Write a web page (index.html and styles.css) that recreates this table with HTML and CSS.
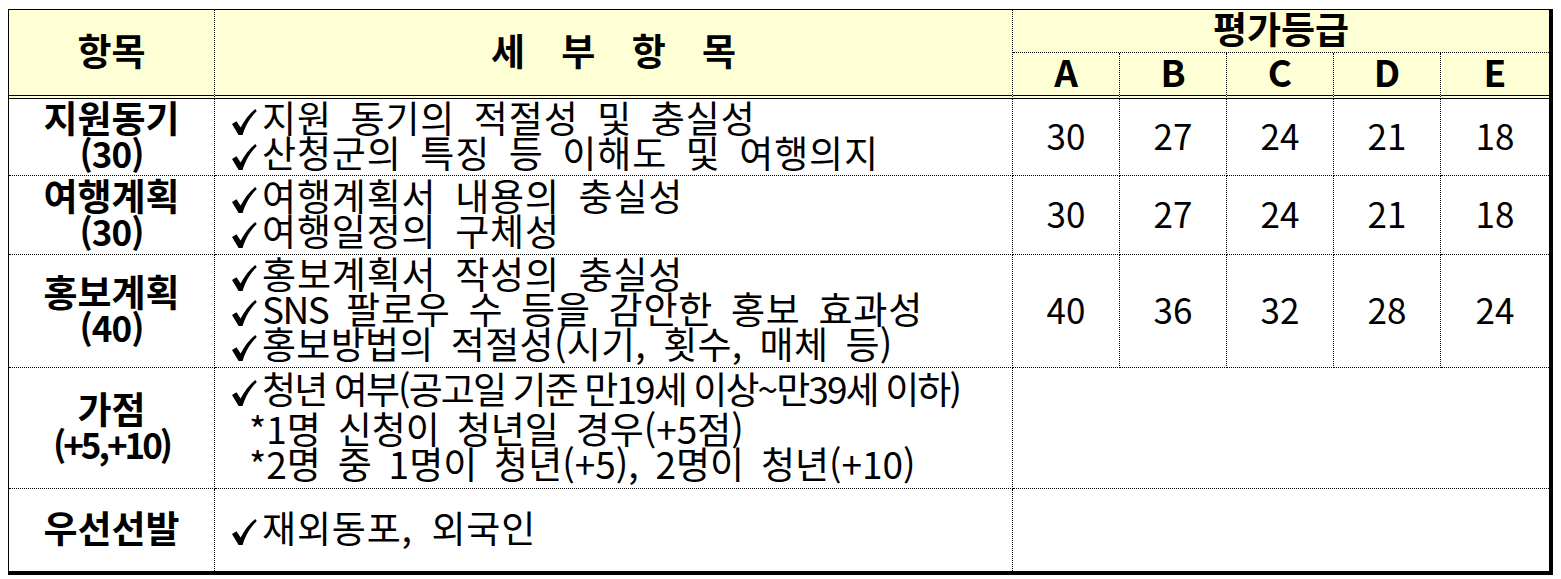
FILE: index.html
```html
<!DOCTYPE html>
<html lang="ko">
<head>
<meta charset="utf-8">
<title>평가등급</title>
<link rel="stylesheet" href="styles.css">
</head>
<body>
<div class="sheet">
  <div class="cell head h-item dbl">항목</div>
  <div class="cell head h-detail dbl"><span class="spaced">세 부 항 목</span></div>
  <div class="cell head h-grade last-col">평가등급</div>
  <div class="cell head h-sub dbl">A</div>
  <div class="cell head h-sub dbl">B</div>
  <div class="cell head h-sub dbl">C</div>
  <div class="cell head h-sub dbl">D</div>
  <div class="cell head h-sub dbl last-col">E</div>

  <div class="cell cat"><div>지원동기</div><div class="lat">(30)</div></div>
  <div class="cell detail">
    <div class="line"><svg class="chk" viewBox="0 0 25 26"><path d="M0 15 L4.5 12.2 L8.6 18.6 C12.6 11 17.2 5 23.2 0 L24.8 2 C18.8 8 13.8 15.5 10.6 26 L6.6 26 Z"/></svg>지원 동기의 적절성 및 충실성</div>
    <div class="line"><svg class="chk" viewBox="0 0 25 26"><path d="M0 15 L4.5 12.2 L8.6 18.6 C12.6 11 17.2 5 23.2 0 L24.8 2 C18.8 8 13.8 15.5 10.6 26 L6.6 26 Z"/></svg>산청군의 특징 등 이해도 및 여행의지</div>
  </div>
  <div class="cell num">30</div>
  <div class="cell num">27</div>
  <div class="cell num">24</div>
  <div class="cell num">21</div>
  <div class="cell num last-col">18</div>

  <div class="cell cat"><div>여행계획</div><div class="lat">(30)</div></div>
  <div class="cell detail">
    <div class="line"><svg class="chk" viewBox="0 0 25 26"><path d="M0 15 L4.5 12.2 L8.6 18.6 C12.6 11 17.2 5 23.2 0 L24.8 2 C18.8 8 13.8 15.5 10.6 26 L6.6 26 Z"/></svg>여행계획서 내용의 충실성</div>
    <div class="line"><svg class="chk" viewBox="0 0 25 26"><path d="M0 15 L4.5 12.2 L8.6 18.6 C12.6 11 17.2 5 23.2 0 L24.8 2 C18.8 8 13.8 15.5 10.6 26 L6.6 26 Z"/></svg>여행일정의 구체성</div>
  </div>
  <div class="cell num">30</div>
  <div class="cell num">27</div>
  <div class="cell num">24</div>
  <div class="cell num">21</div>
  <div class="cell num last-col">18</div>

  <div class="cell cat"><div>홍보계획</div><div class="lat">(40)</div></div>
  <div class="cell detail">
    <div class="line"><svg class="chk" viewBox="0 0 25 26"><path d="M0 15 L4.5 12.2 L8.6 18.6 C12.6 11 17.2 5 23.2 0 L24.8 2 C18.8 8 13.8 15.5 10.6 26 L6.6 26 Z"/></svg>홍보계획서 작성의 충실성</div>
    <div class="line sns"><svg class="chk" viewBox="0 0 25 26"><path d="M0 15 L4.5 12.2 L8.6 18.6 C12.6 11 17.2 5 23.2 0 L24.8 2 C18.8 8 13.8 15.5 10.6 26 L6.6 26 Z"/></svg><span class="abbr">SNS</span> 팔로우 수 등을 감안한 홍보 효과성</div>
    <div class="line paren"><svg class="chk" viewBox="0 0 25 26"><path d="M0 15 L4.5 12.2 L8.6 18.6 C12.6 11 17.2 5 23.2 0 L24.8 2 C18.8 8 13.8 15.5 10.6 26 L6.6 26 Z"/></svg>홍보방법의 적절성(시기, 횟수, 매체 등)</div>
  </div>
  <div class="cell num">40</div>
  <div class="cell num">36</div>
  <div class="cell num">32</div>
  <div class="cell num">28</div>
  <div class="cell num last-col">24</div>

  <div class="cell cat"><div>가점</div><div class="lat lat-tight">(+5,+10)</div></div>
  <div class="cell detail">
    <div class="line first tight"><svg class="chk" viewBox="0 0 25 26"><path d="M0 15 L4.5 12.2 L8.6 18.6 C12.6 11 17.2 5 23.2 0 L24.8 2 C18.8 8 13.8 15.5 10.6 26 L6.6 26 Z"/></svg>청년 여부(공고일 기준 만19세 이상~만39세 이하)</div>
    <div class="line note">*1명 신청이 청년일 경우(+5점)</div>
    <div class="line note">*2명 중 1명이 청년(+5), 2명이 청년(+10)</div>
  </div>
  <div class="cell blank last-col"></div>

  <div class="cell cat last-row"><div>우선선발</div></div>
  <div class="cell detail last-row">
    <div class="line"><svg class="chk" viewBox="0 0 25 26"><path d="M0 15 L4.5 12.2 L8.6 18.6 C12.6 11 17.2 5 23.2 0 L24.8 2 C18.8 8 13.8 15.5 10.6 26 L6.6 26 Z"/></svg>재외동포, 외국인</div>
  </div>
  <div class="cell blank last-col last-row"></div>
</div>
</body>
</html>
```

FILE: styles.css
```css
html, body {
  margin: 0;
  padding: 0;
  background: #ffffff;
}

body {
  padding: 9px 0 0 8px;
  font-family: "Noto Sans CJK KR", "Open Sans", sans-serif;
  color: #000000;
}

.sheet {
  display: grid;
  grid-template-columns: 206px 798px 107px 107px 107px 107px 108px;
  grid-template-rows: 43px 46px 77px 79px 113px 121px 82px;
  width: max-content;
  border-top: 1px solid #000;
  border-left: 1px solid #000;
  border-right: 4px solid #000;
  border-bottom: 4px solid #000;
}

.cell {
  box-sizing: border-box;
  border-right: 1px dotted #000;
  border-bottom: 1px dotted #000;
  font-size: 37px;
  line-height: 35px;
  padding-bottom: 5px;
  display: flex;
  align-items: center;
  justify-content: center;
}

.last-col { border-right: none; }
.last-row { border-bottom: none; }

.head {
  background: #ffffd5;
  font-weight: 700;
}

.dbl { border-bottom: 4px double #000; }

.h-item, .h-detail { grid-row: span 2; }
.h-grade { grid-column: span 5; }

.spaced {
  letter-spacing: 13px;
  padding-left: 13px;
}

.cat {
  flex-direction: column;
  font-weight: 700;
}

.lat {
  font-size: 35px;
  letter-spacing: -1px;
}

.lat-tight { letter-spacing: -3px; }

.detail {
  flex-direction: column;
  align-items: flex-start;
  justify-content: center;
  padding-left: 17px;
  letter-spacing: 0.85px;
  word-spacing: 7.5px;
  white-space: nowrap;
}

.line {
  display: block;
  height: 35px;
}

.abbr { letter-spacing: -1.5px; }

.chk {
  display: inline-block;
  width: 25px;
  height: 26px;
  margin-right: 5px;
  vertical-align: -2px;
  fill: #000;
}

.sns { word-spacing: 6.5px; }
.paren { letter-spacing: 0.3px; word-spacing: 6.5px; }

.first { margin-bottom: 5px; }
.tight {
  word-spacing: -1px;
  letter-spacing: -1.9px;
}
.note {
  padding-left: 17px;
  letter-spacing: 0;
  word-spacing: 6.5px;
}

.blank { grid-column: span 5; }

.num {
  font-weight: 400;
  font-size: 35px;
}
```
